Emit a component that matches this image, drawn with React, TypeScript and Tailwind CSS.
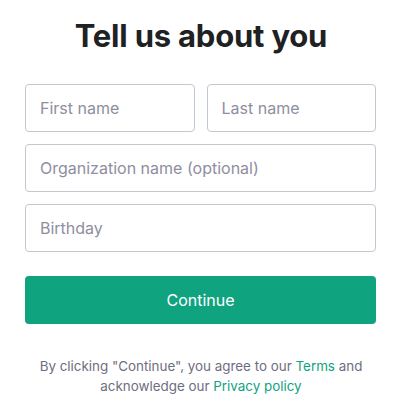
export default function App() {
  const field =
    "h-12 w-full rounded-[4px] border border-[#c2c8d0] bg-white px-[14px] text-base text-[#2d333a] placeholder:text-[#8e8ea0] outline-none";
  return (
    <div className="flex h-[408px] w-[402px] flex-col bg-white font-['Inter',sans-serif]">
      <h1 className="mt-[16px] text-center text-[31px] font-bold leading-[40px] tracking-[-0.2px] text-[#202123]">Tell us about you</h1>
      <form className="ml-[25px] mt-[28px] flex w-[351px] flex-col gap-3" onSubmit={(e) => e.preventDefault()}>
        <div className="flex gap-3">
          <input className={field} placeholder="First name" />
          <input className={field} placeholder="Last name" />
        </div>
        <input className={field} placeholder="Organization name (optional)" />
        <input className={field} placeholder="Birthday" />
        <button className="mt-3 h-12 w-full rounded-[4px] bg-[#10a37f] text-base text-white">Continue</button>
      </form>
      <p className="mt-[32px] text-center text-[13.4px] leading-5 text-[#6e6e80]">
        By clicking "Continue", you agree to our <a className="text-[#10a37f]">Terms</a> and
        <br />
        acknowledge our <a className="text-[#10a37f]">Privacy policy</a>
      </p>
    </div>
  );
}
